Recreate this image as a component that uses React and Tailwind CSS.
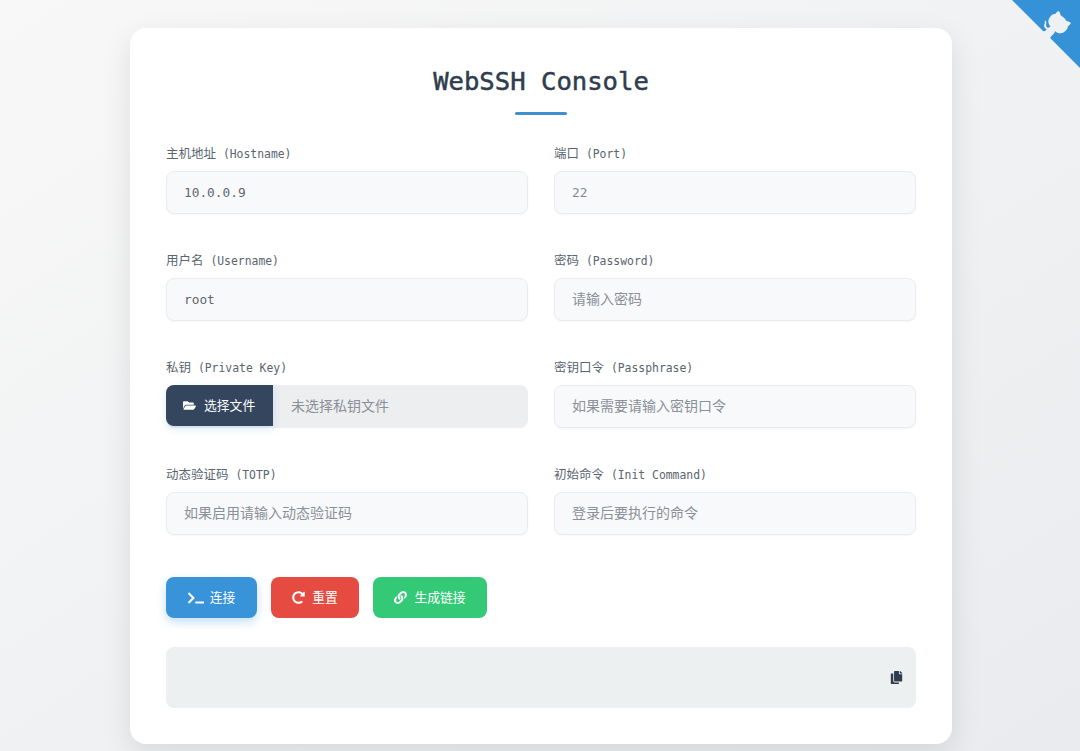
import React from "react";
import { FaFolderOpen, FaTerminal, FaRedoAlt, FaLink, FaCopy } from "react-icons/fa";

const inputClass =
  "w-full h-[43px] px-[17px] rounded-lg bg-[#f8f9fa] border border-[#e9ecef] shadow-[0_1px_2px_rgba(0,0,0,0.04)] text-[12.8px] text-[#5f6770] outline-none placeholder:text-[14px] placeholder:text-[#8a9097]";

function Field({ zh, en, children }) {
  return (
    <div>
      <label className="block h-[17px] mb-[9px] text-[11.4px] leading-[17px] text-[#5a6570] whitespace-pre">
        <span className="text-[12.5px]">{zh}</span> {en}
      </label>
      {children}
    </div>
  );
}

function GithubCorner() {
  return (
    <svg viewBox="0 0 250 250" className="absolute top-0 right-0 w-[68px] h-[68px] text-[#eef1f4]">
      <path d="M0,0 L115,115 L130,115 L142,142 L250,250 L250,0 Z" fill="#3692d6" />
      <path
        d="M128.3,109.0 C113.8,99.7 119.0,89.6 119.0,89.6 C122.0,82.7 120.5,78.6 120.5,78.6 C119.2,72.0 123.4,76.3 123.4,76.3 C127.3,80.9 125.5,87.3 125.5,87.3 C122.9,97.6 130.6,101.9 134.4,103.2"
        fill="currentColor"
      />
      <path
        d="M115.0,115.0 C114.9,115.1 118.7,116.5 119.8,115.4 L133.7,101.6 C136.9,99.2 139.9,98.4 142.2,98.6 C133.8,88.0 127.5,74.4 143.8,58.0 C148.5,53.4 154.0,51.2 159.7,51.0 C160.3,49.4 163.2,43.6 171.4,40.1 C171.4,40.1 176.1,42.5 178.8,56.2 C183.1,58.6 187.2,61.8 190.9,65.4 C194.5,69.0 197.7,73.2 200.1,77.6 C213.8,80.2 216.3,84.9 216.3,84.9 C212.7,93.1 206.9,96.0 205.4,96.6 C205.1,102.4 203.0,107.8 198.3,112.5 C181.9,128.9 168.3,122.5 157.7,114.1 C157.9,116.9 156.7,120.9 152.7,124.9 L141.0,136.5 C139.8,137.7 141.6,141.9 141.8,141.8 Z"
        fill="currentColor"
      />
    </svg>
  );
}

export default function App() {
  return (
    <div className="relative h-[751px] overflow-hidden flex justify-center pl-[2px] pt-[28px] bg-gradient-to-br from-[#f8f8f8] to-[#e9ebee] font-['DejaVu_Sans_Mono','Noto_Sans_CJK_SC',monospace]">
      <GithubCorner />

      <div className="w-[822px] h-[716px] px-9 pt-[36px] bg-white rounded-2xl shadow-[0_10px_30px_rgba(0,0,0,0.1)]">
        <h1 className="text-center text-[25.6px] leading-[34px] font-normal text-[#2f3d4e] [-webkit-text-stroke:0.5px_#2f3d4e]">WebSSH Console</h1>
        <div className="w-[52px] h-[3px] mx-auto mt-[14px] mb-[30px] rounded-full bg-[#3f8fcf]" />

        <div className="grid grid-cols-2 gap-x-[26px] gap-y-[38px]">
          <Field zh="主机地址" en="(Hostname)">
            <input className={inputClass} defaultValue="10.0.0.9" />
          </Field>
          <Field zh="端口" en="(Port)">
            <input className={`${inputClass} text-[#85898e]`} defaultValue="22" />
          </Field>
          <Field zh="用户名" en="(Username)">
            <input className={inputClass} defaultValue="root" />
          </Field>
          <Field zh="密码" en="(Password)">
            <input className={inputClass} placeholder="请输入密码" />
          </Field>
          <Field zh="私钥" en="(Private Key)">
            <div className="flex h-[43px] rounded-lg bg-[#eceef0]">
              <button className="flex items-center gap-2 w-[107px] h-[41px] pl-[17px] rounded-lg rounded-r-none bg-[#34465e] text-white text-[12.8px] shadow-[0_3px_8px_rgba(52,152,219,0.18)]">
                <FaFolderOpen className="text-[13px]" />
                选择文件
              </button>
              <span className="pl-[18px] leading-[43px] text-[14px] text-[#8a9097]">未选择私钥文件</span>
            </div>
          </Field>
          <Field zh="密钥口令" en="(Passphrase)">
            <input className={inputClass} placeholder="如果需要请输入密钥口令" />
          </Field>
          <Field zh="动态验证码" en="(TOTP)">
            <input className={inputClass} placeholder="如果启用请输入动态验证码" />
          </Field>
          <Field zh="初始命令" en="(Init Command)">
            <input className={inputClass} placeholder="登录后要执行的命令" />
          </Field>
        </div>

        <div className="flex gap-[14px] mt-[42px]">
          <button className="flex items-center justify-center gap-[6px] w-[91px] h-[41px] rounded-lg bg-[#3893d9] text-white text-[12.8px] shadow-[0_4px_10px_rgba(52,152,219,0.3)]">
            <FaTerminal className="text-[16px]" />
            连接
          </button>
          <button className="flex items-center justify-center gap-[7px] w-[88px] h-[41px] rounded-lg bg-[#e54b41] text-white text-[12.8px]">
            <FaRedoAlt className="text-[13px]" />
            重置
          </button>
          <button className="flex items-center justify-center gap-[7px] w-[114px] h-[41px] rounded-lg bg-[#33c976] text-white text-[12.8px]">
            <FaLink className="text-[13px]" />
            生成链接
          </button>
        </div>

        <div className="flex items-center justify-end h-[61px] mt-[29px] pr-[13px] rounded-lg bg-[#ecf0f1]">
          <FaCopy className="text-[13px] text-[#2f3d4e]" />
        </div>
      </div>
    </div>
  );
}
